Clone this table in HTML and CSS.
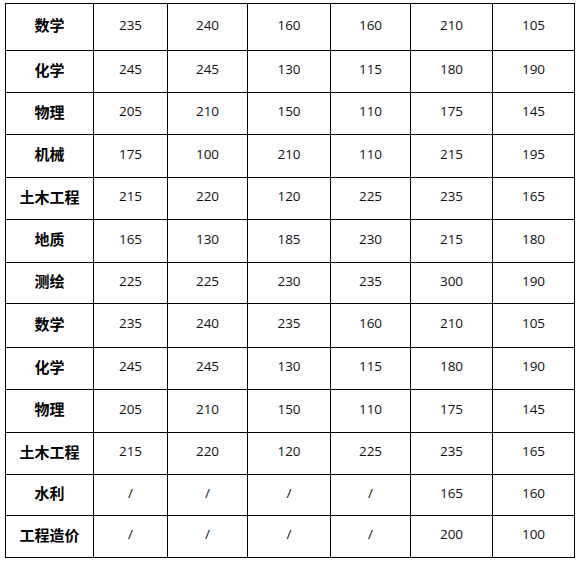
FILE: index.html
```html
<!DOCTYPE html>
<html lang="zh">
<head>
<meta charset="utf-8">
<link rel="stylesheet" href="styles.css">
</head>
<body>
<table class="score">
<colgroup>
<col class="c1"><col class="c2"><col class="c3"><col class="c4"><col class="c5"><col class="c6"><col class="c7">
</colgroup>
<tbody>
<tr class="first"><th>数学</th><td>235</td><td>240</td><td>160</td><td>160</td><td>210</td><td>105</td></tr>
<tr><th>化学</th><td>245</td><td>245</td><td>130</td><td>115</td><td>180</td><td>190</td></tr>
<tr><th>物理</th><td>205</td><td>210</td><td>150</td><td>110</td><td>175</td><td>145</td></tr>
<tr class="tall"><th>机械</th><td>175</td><td>100</td><td>210</td><td>110</td><td>215</td><td>195</td></tr>
<tr><th>土木工程</th><td>215</td><td>220</td><td>120</td><td>225</td><td>235</td><td>165</td></tr>
<tr class="tall"><th>地质</th><td>165</td><td>130</td><td>185</td><td>230</td><td>215</td><td>180</td></tr>
<tr class="short"><th>测绘</th><td>225</td><td>225</td><td>230</td><td>235</td><td>300</td><td>190</td></tr>
<tr class="taller"><th>数学</th><td>235</td><td>240</td><td>235</td><td>160</td><td>210</td><td>105</td></tr>
<tr><th>化学</th><td>245</td><td>245</td><td>130</td><td>115</td><td>180</td><td>190</td></tr>
<tr class="tall"><th>物理</th><td>205</td><td>210</td><td>150</td><td>110</td><td>175</td><td>145</td></tr>
<tr><th>土木工程</th><td>215</td><td>220</td><td>120</td><td>225</td><td>235</td><td>165</td></tr>
<tr class="short"><th>水利</th><td>/</td><td>/</td><td>/</td><td>/</td><td>165</td><td>160</td></tr>
<tr><th>工程造价</th><td>/</td><td>/</td><td>/</td><td>/</td><td>200</td><td>100</td></tr>
</tbody>
</table>
</body>
</html>
```
FILE: styles.css
```css
html, body {
  margin: 0;
  background: #ffffff;
}
body {
  padding: 3px 0 0 5px;
}
.score {
  border-collapse: collapse;
  table-layout: fixed;
  width: 569px;
  color: #000;
}
.c1 { width: 88px; }
.c2 { width: 74px; }
.c3 { width: 80px; }
.c4 { width: 83px; }
.c5 { width: 80px; }
.c6 { width: 82px; }
.c7 { width: 82px; }
.score tr { height: 42px; }
.score tr.first { height: 47px; }
.score tr.tall { height: 43px; }
.score tr.taller { height: 44px; }
.score tr.short { height: 41px; }
.score th, .score td {
  border: 1px solid #000;
  padding: 0 0 5px 0;
  text-align: center;
  vertical-align: middle;
}
.score th {
  font-family: "Noto Sans CJK SC", sans-serif;
  font-weight: 700;
  font-size: 15px;
}
.score td {
  font-family: "Open Sans", "Noto Sans CJK SC", sans-serif;
  font-weight: 400;
  font-size: 13.5px;
  color: #111;
}
```
